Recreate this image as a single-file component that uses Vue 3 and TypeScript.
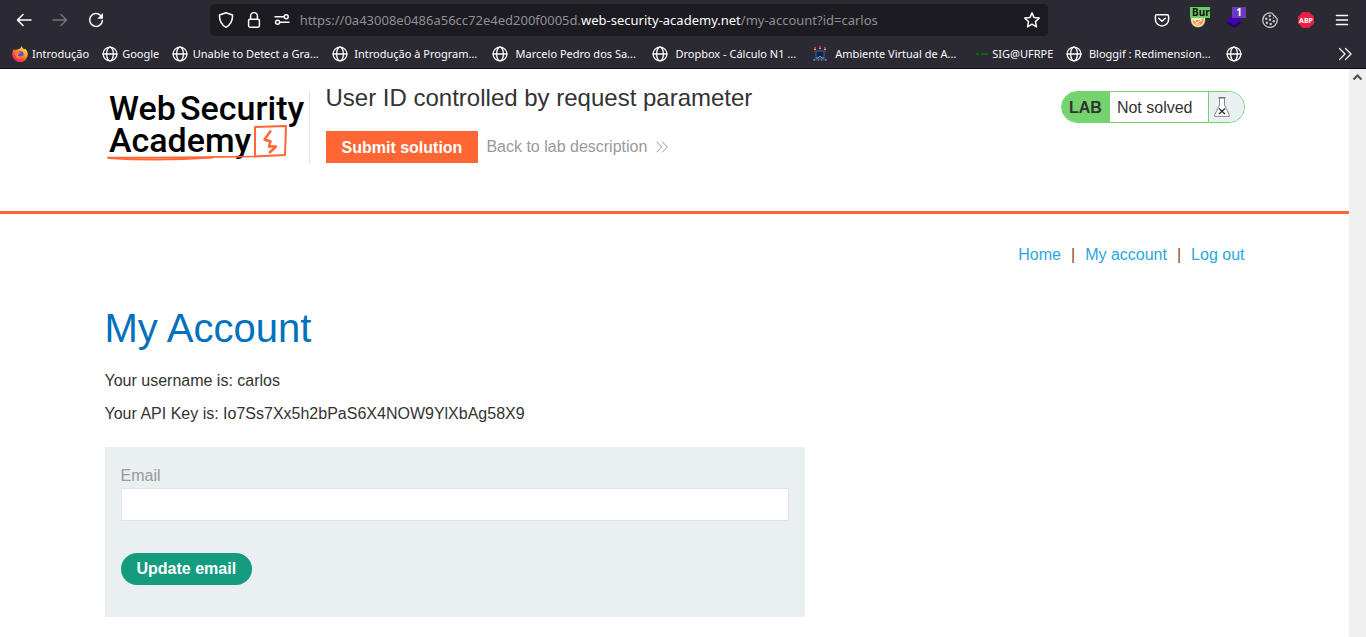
<script setup lang="ts">
import { ref } from 'vue'

interface Bookmark {
  label: string
  icon: 'firefox' | 'globe' | 'crest' | 'key'
  wide?: boolean
}

const bookmarks: Bookmark[] = [
  { label: 'Introdução', icon: 'firefox' },
  { label: 'Google', icon: 'globe' },
  { label: 'Unable to Detect a Gra...', icon: 'globe', wide: true },
  { label: 'Introdução à Program...', icon: 'globe', wide: true },
  { label: 'Marcelo Pedro dos Sa...', icon: 'globe', wide: true },
  { label: 'Dropbox - Cálculo N1 ...', icon: 'globe', wide: true },
  { label: 'Ambiente Virtual de A...', icon: 'crest', wide: true },
  { label: 'SIG@UFRPE', icon: 'key' },
  { label: 'Bloggif : Redimension...', icon: 'globe', wide: true },
  { label: '', icon: 'globe' },
]

const email = ref('')
</script>

<template>
  <div class="window">
    <header class="chrome">
      <div class="toolbar">
        <button class="tool" aria-label="Back">
          <svg width="16" height="16" viewBox="0 0 16 16"><path d="M15 8H1.8M7 2.5 1.5 8 7 13.5" class="line" /></svg>
        </button>
        <button class="tool dim" aria-label="Forward" disabled>
          <svg width="16" height="16" viewBox="0 0 16 16"><path d="M1 8h13.2M9 2.5 14.5 8 9 13.5" class="line" /></svg>
        </button>
        <button class="tool" aria-label="Reload">
          <svg width="16" height="16" viewBox="0 0 16 16">
            <path d="M12.6 3.5A6.4 6.4 0 1 0 14.4 8.600" class="line" />
            <path d="M15 1v5.300q0 .4-.4.4H9.300z" fill="currentColor" />
          </svg>
        </button>
        <span class="spring"></span>
        <div class="urlbar">
          <button class="urltool" aria-label="Tracking protection">
            <svg width="16" height="16" viewBox="0 0 16 16"><path d="M8 .7 14.500 3C14.700 8.700 12.500 12.800 8 15.300 3.500 12.800 1.300 8.700 1.500 3z" class="line" /></svg>
          </button>
          <button class="urltool" aria-label="Connection">
            <svg width="16" height="16" viewBox="0 0 16 16">
              <rect x="2.600" y="7.200" width="10.800" height="8" rx="1.400" class="line" />
              <path d="M4.600 7V4a3.400 3.400 0 0 1 6.800 0v3" class="line" />
            </svg>
          </button>
          <button class="urltool" aria-label="Permissions">
            <svg width="16" height="16" viewBox="0 0 16 16">
              <path d="M1 4.700h8.500M6.500 10.300H15" class="line" />
              <circle cx="12.200" cy="4.700" r="2" class="line" />
              <circle cx="3.600" cy="10.300" r="2" class="line" />
            </svg>
          </button>
          <div class="address">https://0a43008e0486a56cc72e4ed200f0005d.<b>web-security-academy.net</b>/my-account?id=carlos</div>
          <button class="urltool" aria-label="Bookmark this page">
            <svg width="16" height="16" viewBox="0 0 16 16"><path d="m8 .9 2.100 4.700 5.100.5-3.800 3.500 1.100 5.200L8 12.200l-4.500 2.600 1.100-5.200L.8 6.100l5.100-.5z" class="line" /></svg>
          </button>
        </div>
        <span class="spring"></span>
        <button class="tool" aria-label="Pocket">
          <svg width="16" height="16" viewBox="0 0 16 16">
            <path d="M2.800 2.700h10.400q1.400 0 1.400 1.400v3.300a6.600 6.600 0 0 1-13.200 0V4.100q0-1.400 1.400-1.400z" class="line" />
            <path d="m4.700 6.300 3.300 3 3.300-3" class="line" />
          </svg>
        </button>
        <button class="tool" aria-label="Burp proxy">
          <svg width="16" height="16" viewBox="0 0 16 16">
            <circle cx="8" cy="8" r="7.500" fill="#8d8378" />
            <path d="M1 6h14c0 6-3 9-7 9s-7-3-7-9z" fill="#f3e3cf" />
            <path d="M2.500 8q2.500 1 5 0 3 1 6-2c0 5-2 7.500-5.500 7.500S3 11.500 2.500 8z" fill="#f7962c" />
            <path d="m4 8 3 3 5-3M5 12h5" fill="none" stroke="#fff0d8" />
          </svg>
          <span class="badge green">Burp</span>
        </button>
        <button class="tool" aria-label="Layers">
          <svg width="18" height="18" viewBox="0 0 18 18">
            <path d="m1 12 8-5 8 5-8 5z" fill="#24066b" />
            <path d="m1 9 8-5 8 5-8 5z" fill="#4502a8" />
          </svg>
          <span class="badge violet">1</span>
        </button>
        <button class="tool soft" aria-label="Cookies">
          <svg width="16" height="16" viewBox="0 0 16 16">
            <path d="M8.800.9C4.500.500.8 3.800.8 8a7.200 7.200 0 0 0 14.400.5c.2-1.500-.2-2.500-1.200-2.800-.6-.2-.4-1.500-1.300-1.700-1-.2-1.300-.5-1.500-1.400C11 1.500 10 1 8.800.9z" fill="none" stroke="currentColor" stroke-width="1.300" />
            <g fill="currentColor">
              <circle cx="7.700" cy="4" r="1.200" /><circle cx="4.300" cy="6.700" r="1.200" />
              <circle cx="8" cy="7.800" r="1.200" /><circle cx="4.900" cy="10.700" r="1.200" />
              <circle cx="8.700" cy="12" r="1.200" /><circle cx="11.800" cy="9.200" r="1.200" /><circle cx="11.300" cy="5.900" r=".7" />
            </g>
          </svg>
        </button>
        <button class="tool" aria-label="Adblock Plus">
          <svg width="16" height="16" viewBox="0 0 16 16">
            <path d="M4.700 0h6.600L16 4.700v6.600L11.300 16H4.700L0 11.300V4.700z" fill="#ed1e45" />
            <text x="8" y="11" class="abp" text-anchor="middle">ABP</text>
          </svg>
        </button>
        <button class="tool" aria-label="Menu">
          <svg width="16" height="16" viewBox="0 0 16 16"><path d="M2.500 3.500h11M2.500 8h11M2.500 12.500h11" class="line" /></svg>
        </button>
      </div>

      <nav class="bookmarks" aria-label="Bookmarks">
        <a v-for="(b, i) in bookmarks" :key="i" href="#" class="bookmark" :class="{ wide: b.wide }" :aria-label="b.label || 'Bookmark'">
          <svg v-if="b.icon === 'globe'" width="16" height="16" viewBox="0 0 16 16">
            <circle cx="8" cy="8" r="6.900" class="line thin" />
            <ellipse cx="8" cy="8" rx="3.400" ry="6.900" class="line thin" />
            <path d="M1 8h14" class="line thin" />
          </svg>
          <svg v-else-if="b.icon === 'firefox'" width="16" height="16" viewBox="0 0 16 16">
            <defs>
              <linearGradient id="flame" x1=".85" y1="0" x2=".2" y2="1">
                <stop offset="0" stop-color="#fff04a" /><stop offset=".4" stop-color="#ffa322" />
                <stop offset=".7" stop-color="#ff4538" /><stop offset="1" stop-color="#e3168c" />
              </linearGradient>
            </defs>
            <path d="M9.700 0c.3 2 2 2.600 2.800 3.600l.5-1c1.700 1.600 2.800 3.800 2.800 6A7.800 7.800 0 0 1 .2 8.300C.2 6 1 4.200 2.300 2.700l.5 1.700c.8-.7 1.700-1 2.800-1C7.500 3.300 9 2 9.700 0z" fill="url(#flame)" />
            <circle cx="8.300" cy="8.500" r="3.300" fill="#6b42e8" />
            <path d="M3.500 6.200c2-.9 3.800-.5 5.300.6C7.500 8 6.500 7.500 5.900 9c1 2 4 2 5.500-.2.500 3-1.500 4.500-3.800 4.400C4.500 13 2.800 9.700 3.500 6.200z" fill="#ff7a2c" />
          </svg>
          <svg v-else-if="b.icon === 'crest'" width="16" height="16" viewBox="0 0 16 16">
            <path d="M2 4h12l-1 3v4l2 4h-3l-2-2H6l-2 2H1l2-4V7z" fill="#294a78" />
            <path d="M2 1h2v2H2zM7 0h2v2H7zM12 1h2v2h-2z" fill="#e12f2f" />
            <path d="M2 3h2v1H2zM7 2h2v1H7zM12 3h2v1h-2z" fill="#f2a43a" />
            <path d="M5 6h6v5H5z" fill="#132341" />
            <path d="M4 12h2l2-2 2 2h2M6 15l1-2M10 15l-1-2M1 14h2M13 14h2" fill="none" stroke="#8395b0" />
          </svg>
          <svg v-else width="16" height="16" viewBox="0 0 16 16">
            <path d="M1 4h6v3H3v2h5v4H1" fill="none" stroke="#262d2c" stroke-width="2" />
            <path d="M4 7h3v2H4zM9 7h2v2H9zM11 7h5v2h-5z" fill="#0a6512" />
          </svg>
          <span v-if="b.label" class="label">{{ b.label }}</span>
        </a>
        <button class="overflow" aria-label="More bookmarks">
          <svg width="14" height="14" viewBox="0 0 14 14"><path d="m1.500 1.500 5.500 5.500-5.500 5.500M7.500 1.500 13 7l-5.500 5.500" class="line thin" /></svg>
        </button>
      </nav>
    </header>

    <div class="viewport">
      <div class="page">
        <header class="lab">
          <div class="container lab-row">
            <a href="#" class="logo" aria-label="Web Security Academy">
              <svg width="204" height="73" viewBox="0 0 204 73">
                <g class="wordmark">
                  <text x="4" y="29">Web</text>
                  <text x="75" y="29">Security</text>
                  <text x="4" y="61">Academy</text>
                </g>
                <g fill="none" stroke="#ff6633" stroke-linejoin="round">
                  <path d="M150 66V36l31-1-1 29-31 1.500" stroke-width="2" />
                  <path d="M2 66.500c50 .5 100-.5 148-1" stroke-width="1.600" />
                  <path d="M3 67c30 2 75 1.500 105-.5" stroke-width="2" />
                  <path d="m166 39.500-6.500 9 6 2-1.500 5h7l-7 6.500" stroke-width="2.400" />
                </g>
              </svg>
            </a>
            <div class="lab-title">
              <h2>User ID controlled by request parameter</h2>
              <div class="actions">
                <button class="submit">Submit solution</button>
                <a href="#" class="back">Back to lab description
                  <svg width="12" height="12" viewBox="0 0 12 12"><path d="m.7.700 5 5.300-5 5.300M6.200.700l5 5.300-5 5.300" fill="none" stroke="#999" /></svg>
                </a>
              </div>
            </div>
            <div class="status">
              <strong>LAB</strong>
              <span class="state">Not solved</span>
              <span class="flask">
                <svg width="16" height="20" viewBox="0 0 16 20">
                  <path d="M5.500 1v7L.7 18v1.400h14.600V18L10.500 8V1z" fill="#fff" stroke="#888" />
                  <path d="M4.500.600h7" stroke="#777" stroke-width="1.200" />
                  <path d="m5 11.500 6 5.500M11 11.500 5 17" stroke="#333" stroke-width="1.400" />
                </svg>
              </span>
            </div>
          </div>
        </header>

        <main class="container">
          <nav class="links" aria-label="Account">
            <a href="#">Home</a><span>|</span><a href="#">My account</a><span>|</span><a href="#">Log out</a>
          </nav>
          <h1>My Account</h1>
          <p>Your username is: carlos</p>
          <p>Your API Key is: Io7Ss7Xx5h2bPaS6X4NOW9YlXbAg58X9</p>
          <form class="panel" @submit.prevent>
            <label for="email">Email</label>
            <input id="email" v-model="email" type="email" />
            <button class="update" type="submit">Update email</button>
          </form>
        </main>
      </div>
      <div class="scrollbar">
        <svg width="17" height="17" viewBox="0 0 17 17"><path d="m4.500 10.500 4-4 4 4" fill="none" stroke="#505050" stroke-width="2.200" /></svg>
      </div>
    </div>
  </div>
</template>

<style>
body {
  margin: 0;
}
</style>

<style scoped>
* {
  box-sizing: border-box;
}
.window {
  min-height: 100vh;
  display: flex;
  flex-direction: column;
  font-family: "Liberation Sans", Arial, sans-serif;
  font-size: 16px;
  color: #333332;
  background: #fff;
}
button {
  border: 0;
  padding: 0;
  font: inherit;
  color: inherit;
  background: none;
}
a {
  text-decoration: none;
}
svg {
  display: block;
  flex: none;
}
.line {
  fill: none;
  stroke: currentColor;
  stroke-width: 1.5;
  stroke-linecap: round;
  stroke-linejoin: round;
}
.thin {
  stroke-width: 1.3;
}

/* Browser chrome */
.chrome {
  background: #2b2a33;
  color: #fbfbfe;
  border-bottom: 1px solid #0c0c0d;
  font-family: "Noto Sans", sans-serif;
}
.toolbar {
  display: flex;
  align-items: center;
  height: 40px;
  padding: 0 6px;
}
.tool {
  position: relative;
  width: 36px;
  height: 32px;
  display: flex;
  align-items: center;
  justify-content: center;
  flex: none;
}
.dim {
  color: #75747b;
}
.soft {
  color: #c9c9cd;
}
.spring {
  flex: 96 1 0;
}
.urlbar {
  flex: 838 1 0;
  min-width: 0;
  height: 32px;
  padding: 0 2px;
  display: flex;
  align-items: center;
  border-radius: 4px;
  background: #1c1b22;
}
.urltool {
  width: 28px;
  height: 28px;
  display: flex;
  align-items: center;
  justify-content: center;
  flex: none;
}
.address {
  flex: 1;
  min-width: 0;
  padding-left: 4px;
  overflow: hidden;
  white-space: nowrap;
  font-size: 13px;
  line-height: 20px;
  color: #8f8f94;
}
.address b {
  font-weight: 400;
  color: #fbfbfe;
}
.badge {
  position: absolute;
  overflow: hidden;
  font-size: 10px;
  font-weight: 700;
  text-align: center;
}
.green {
  top: 3px;
  left: 10px;
  width: 20px;
  padding-left: 2px;
  line-height: 11px;
  text-align: left;
  background: #66cc66;
  color: #111;
}
.violet {
  top: 3px;
  left: 16px;
  width: 14px;
  line-height: 11px;
  background: #6a3bc0;
  color: #fff;
}
.abp {
  font: 700 7px "Noto Sans", sans-serif;
  fill: #fff;
}
.bookmarks {
  display: flex;
  align-items: center;
  gap: 13px;
  height: 28px;
  padding: 0 14px 0 12px;
}
.bookmark {
  display: flex;
  align-items: center;
  gap: 4px;
  color: inherit;
  white-space: nowrap;
  font-size: 11px;
  line-height: 16px;
}
.wide {
  width: 147px;
}
.wide .label {
  flex: 1;
  text-align: center;
}
.overflow {
  margin-left: auto;
}

/* Page */
.viewport {
  flex: 1;
  display: flex;
}
.page {
  flex: 1;
  min-width: 0;
}
.scrollbar {
  width: 17px;
  background: #f0f0f0;
}
.container {
  width: 100%;
  max-width: 1140px;
  margin: 0 auto;
}
.lab {
  padding: 22px 0 47px;
  border-bottom: 3px solid #ff6633;
}
.lab-row {
  display: flex;
  align-items: flex-start;
}
.logo {
  border-right: 1px solid #e3e3e3;
}
.wordmark {
  font: 500 34px Roboto, sans-serif;
  fill: #000;
}
.lab-title {
  flex: 1;
  padding-left: 16px;
}
h2 {
  margin: 0;
  padding-bottom: 26px;
  font-size: 24px;
  line-height: 14px;
  font-weight: 400;
}
.actions {
  display: flex;
  align-items: center;
  gap: 8px;
}
.submit {
  height: 32px;
  padding: 1px 16px 0;
  background: #ff6633;
  color: #fff;
  font-weight: 700;
}
.back {
  display: flex;
  align-items: center;
  gap: 9px;
  line-height: 32px;
  color: #999;
}
.status {
  display: flex;
  height: 32px;
  border: 1px solid #72d36f;
  border-radius: 16px;
  overflow: hidden;
  line-height: 32px;
}
.status strong {
  padding: 0 8px 0 7px;
  background: #72d36f;
}
.state {
  padding: 0 15px 0 7px;
}
.flask {
  display: flex;
  align-items: center;
  width: 36px;
  padding-left: 5px;
  border-left: 1px solid #72d36f;
  background: #eaeff2;
}
.links {
  display: flex;
  justify-content: flex-end;
  gap: 10px;
  padding-top: 31px;
  line-height: 20px;
}
.links a {
  color: #29a7df;
}
.links span {
  color: #8a4b16;
}
h1 {
  margin: 39px 0 19px;
  font-size: 40px;
  line-height: 48px;
  font-weight: 400;
  color: #0071bc;
}
p {
  margin: 0 0 13px;
  line-height: 20px;
}
.panel {
  display: flex;
  flex-direction: column;
  align-items: flex-start;
  width: 700px;
  max-width: 100%;
  margin-top: 23px;
  padding: 16px 16px 32px;
  background: #eaeff2;
}
.panel label {
  line-height: 25px;
  color: #999;
}
.panel input {
  width: 100%;
  height: 33px;
  padding: 0 8px;
  border: 1px solid #e3e3e3;
  background: #fff;
  font: inherit;
}
.update {
  height: 32px;
  margin-top: 32px;
  padding: 0 16px;
  border-radius: 16px;
  background: #159b80;
  color: #fff;
  font-weight: 700;
}
</style>
